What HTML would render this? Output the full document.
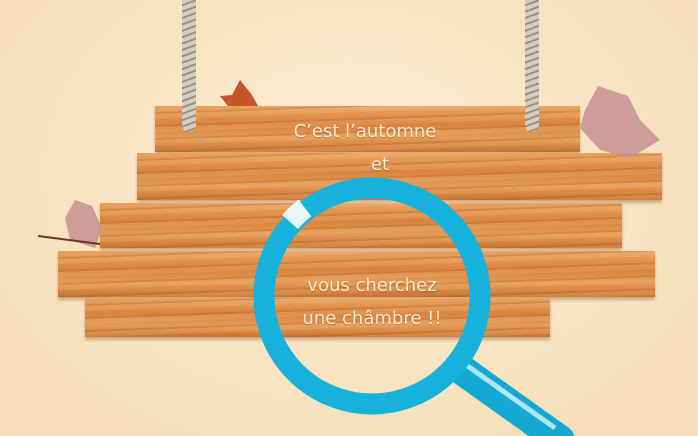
<!DOCTYPE html>
<html><head><style>
body{margin:0;width:698px;height:436px;overflow:hidden;background:radial-gradient(ellipse at 50% 40%,#fbecd2,#f5ddb6);font-family:"DejaVu Sans","Liberation Sans",sans-serif;position:relative}
.p{position:absolute;background:repeating-linear-gradient(178deg,rgba(255,220,170,.0) 0 6px,rgba(150,70,20,.18) 6px 8px,rgba(255,210,160,.15) 8px 13px),linear-gradient(180deg,#eaa460 0%,#d9843e 40%,#e49c58 70%,#c8722e 100%);box-shadow:0 3px 3px rgba(120,60,20,.35)}
.r{position:absolute;width:14px;top:0;background:repeating-linear-gradient(160deg,#d6cdc0 0 4px,#9a9185 4px 6px);border-radius:0 0 7px 7px}
.t{position:absolute;color:#fbe9cf;font-size:18px;text-align:center;width:300px;text-shadow:0 1px 1px rgba(90,40,0,.4)}
</style></head><body>
<div class="p" style="left:155px;top:106px;width:425px;height:46px"></div>
<div class="p" style="left:137px;top:153px;width:525px;height:47px"></div>
<div class="p" style="left:100px;top:203px;width:522px;height:45px"></div>
<div class="p" style="left:58px;top:251px;width:597px;height:46px"></div>
<div class="p" style="left:85px;top:298px;width:465px;height:39px"></div>
<div class="r" style="left:182px;height:132px"></div>
<div class="r" style="left:525px;height:132px"></div>
<svg style="position:absolute;left:0;top:0" width="698" height="436">
<polygon points="240,80 232,95 220,96 228,106 258,106 252,95" fill="#c8552a"/>
<polygon points="598,86 585,110 580,128 600,150 630,158 660,140 640,120 628,96" fill="#c99495" opacity=".9"/>
<polygon points="75,200 65,218 70,240 95,248 102,228 92,206" fill="#c99495" opacity=".9"/>
<line x1="38" y1="236" x2="100" y2="244" stroke="#6a3a1a" stroke-width="2"/>
<line x1="462" y1="370" x2="560" y2="440" stroke="#13a9d2" stroke-width="30" stroke-linecap="round"/>
<line x1="462" y1="362" x2="555" y2="428" stroke="#aee6f5" stroke-width="5"/>
<circle cx="372" cy="296" r="108" fill="none" stroke="#16b2db" stroke-width="21"/>
<path d="M290 222 A108 108 0 0 1 305 208" stroke="#e6f8fd" stroke-width="21" fill="none"/>
</svg>
<div class="t" style="left:215px;top:121px">C’est l’automne</div>
<div class="t" style="left:230px;top:154px">et</div>
<div class="t" style="left:222px;top:275px">vous cherchez</div>
<div class="t" style="left:222px;top:308px">une châmbre !!</div>
</body></html>
